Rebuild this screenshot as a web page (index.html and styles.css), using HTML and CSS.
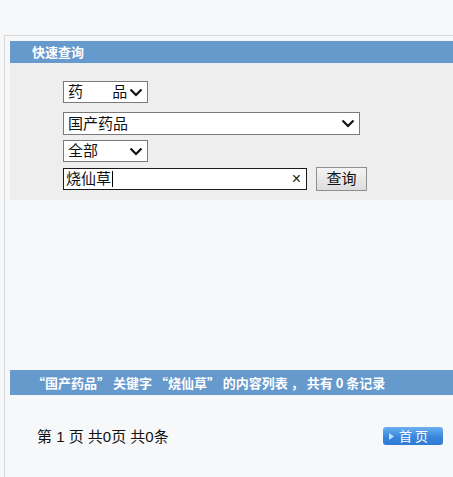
FILE: index.html
```html
<!DOCTYPE html>
<html>
<head>
<meta charset="utf-8">
<link rel="stylesheet" href="styles.css">
</head>
<body>
<div class="frame">
  <div class="bar bar-top">快速查询</div>
  <div class="panel">
    <div class="sel sel-short row1">
      <span class="sel-text">药&nbsp;&nbsp;&nbsp;&nbsp;&nbsp;&nbsp;&nbsp;品</span>
      <svg class="chev" width="14" height="9" viewBox="0 0 14 9"><path d="M1.5 1.5 L7 7 L12.5 1.5" fill="none" stroke="#111" stroke-width="2.2"/></svg>
    </div>
    <div class="sel sel-long row2">
      <span class="sel-text">国产药品</span>
      <svg class="chev" width="14" height="9" viewBox="0 0 14 9"><path d="M1.5 1.5 L7 7 L12.5 1.5" fill="none" stroke="#111" stroke-width="2.2"/></svg>
    </div>
    <div class="sel sel-short row3">
      <span class="sel-text">全部</span>
      <svg class="chev" width="14" height="9" viewBox="0 0 14 9"><path d="M1.5 1.5 L7 7 L12.5 1.5" fill="none" stroke="#111" stroke-width="2.2"/></svg>
    </div>
    <div class="search-row">
      <div class="input">
        <span class="input-text">烧仙草</span><span class="caret"></span>
        <span class="clear">×</span>
      </div>
      <div class="btn">查询</div>
    </div>
  </div>
  <div class="spacer"></div>
  <div class="bar bar-list">“国产药品” 关键字 “烧仙草” 的内容列表 ， 共有 0 条记录</div>
  <div class="pager">
    <span class="pager-text">第 1 页 共0页 共0条</span>
    <div class="first">
      <svg class="tri" width="5" height="7" viewBox="0 0 5 7"><path d="M0 0 L5 3.5 L0 7 Z" fill="#bfe0ff"/></svg>
      <span>首 页</span>
    </div>
  </div>
</div>
</body>
</html>
```
FILE: styles.css
```css
html, body {
  margin: 0;
  padding: 0;
  background: #f6f8fa;
  font-family: "Liberation Sans", "Noto Sans CJK SC", sans-serif;
  height: 477px;
  overflow: hidden;
}
.frame {
  margin-top: 35px;
  margin-left: 4px;
  border-top: 1px solid #d9d9d9;
  border-left: 1px solid #d9d9d9;
  padding: 5px 0 0 5px;
  height: 441px;
}
.bar {
  background: #6699cc;
  color: #fff;
  font-weight: bold;
  font-size: 13px;
  font-family: "Noto Sans CJK SC", sans-serif;
  padding-left: 22px;
}
.bar-top {
  height: 22px;
  line-height: 22px;
}
.bar-list {
  height: 25px;
  line-height: 25px;
  white-space: nowrap;
}
.panel {
  background: #eeeeee;
  height: 137px;
  padding: 18px 0 0 53px;
  box-sizing: border-box;
}
.sel {
  box-sizing: border-box;
  border: 1px solid #7a7a7a;
  background: #fff;
  display: flex;
  align-items: center;
  justify-content: space-between;
  padding: 0 4px 0 4px;
  font-size: 15px;
  color: #111;
}
.sel-text {
  line-height: 18px;
}
.chev { display: block; }
.sel-short { width: 85px; height: 22px; }
.sel-long { width: 297px; height: 23px; }
.row1 { margin-bottom: 9px; }
.row2 { margin-bottom: 5px; }
.row3 { margin-bottom: 6px; }
.search-row {
  display: flex;
  align-items: center;
  gap: 9px;
  margin-top: -1px;
}
.input {
  box-sizing: border-box;
  width: 244px;
  height: 22px;
  border: 1px solid #1a1a1a;
  background: #fff;
  display: flex;
  align-items: center;
  padding-left: 2px;
  font-size: 15px;
  color: #111;
}
.input-text { line-height: 18px; }
.caret {
  display: inline-block;
  width: 1px;
  height: 16px;
  background: #000;
  margin-left: 1px;
}
.clear {
  margin-left: auto;
  margin-right: 5px;
  font-size: 16px;
  color: #222;
  line-height: 14px;
}
.btn {
  box-sizing: border-box;
  width: 51px;
  height: 24px;
  border: 1px solid #8f8f8f;
  background: linear-gradient(#f4f4f4, #dcdcdc);
  font-size: 15px;
  color: #111;
  display: flex;
  align-items: center;
  justify-content: center;
  line-height: 18px;
}
.spacer { height: 170px; }
.pager {
  display: flex;
  align-items: center;
  justify-content: space-between;
  padding: 32px 10px 0 27px;
}
.pager-text {
  font-size: 15px;
  color: #111;
  line-height: 20px;
}
.first {
  width: 60px;
  height: 18px;
  box-sizing: border-box;
  border-radius: 3px;
  background: linear-gradient(#6cb0f2, #3b86dc 55%, #2f7ad4);
  display: flex;
  align-items: center;
  padding-left: 6px;
  gap: 5px;
  color: #fff;
  font-size: 13px;
  font-family: "Noto Sans CJK SC", sans-serif;
  line-height: 16px;
  margin-top: -2px;
}
.tri { display: block; }
```
